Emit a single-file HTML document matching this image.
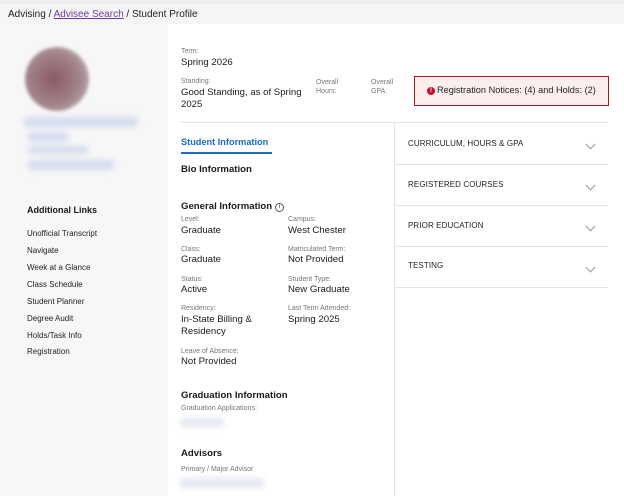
<!DOCTYPE html>
<html><head><meta charset="utf-8"><style>
*{margin:0;padding:0;box-sizing:border-box}
body{width:624px;height:496px;overflow:hidden;background:#f5f5f5;font-family:"Liberation Sans","DejaVu Sans",sans-serif;color:#1a1a1a;position:relative}
.a{position:absolute;white-space:nowrap}
.lb{font-size:7px;color:#777}
.v{font-size:9.6px;color:#1a1a1a}
.h{font-size:9.6px;font-weight:bold}
.lk{font-size:8px;color:#222}
.blur{position:absolute;background:#d5dcef;filter:blur(3px);border-radius:3px}
.acc{position:absolute;left:408px;font-size:8px;color:#222;letter-spacing:.1px}
.chev{position:absolute;left:587px;width:7px;height:7px;border-right:1px solid #999;border-bottom:1px solid #999;transform:rotate(45deg)}
.hl{position:absolute;left:395px;width:213px;height:1px;background:#e3e3e3}
</style></head><body>
<div class="a" style="left:0;top:0;width:624px;height:4px;background:#eee"></div>
<div class="a" style="left:8px;top:9px;font-size:10px;color:#222">Advising / <span style="color:#6a3d9a;text-decoration:underline">Advisee Search</span> / Student Profile</div>
<div class="a" style="left:0;top:24px;width:168px;height:472px;background:#f7f7f7"></div>
<div class="a" style="left:168px;top:24px;width:456px;height:472px;background:#fff"></div>

<div class="a" style="left:25px;top:47px;width:64px;height:64px;border-radius:50%;background:radial-gradient(circle at 45% 50%,#8a5a66,#a3848a 55%,#cfcfcf 100%);filter:blur(1.5px)"></div>
<div class="blur" style="left:24px;top:117px;width:114px;height:10px"></div>
<div class="blur" style="left:28px;top:132px;width:40px;height:10px"></div>
<div class="blur" style="left:28px;top:146px;width:60px;height:8px"></div>
<div class="blur" style="left:28px;top:160px;width:86px;height:10px"></div>

<div class="a h" style="left:27px;top:205px;font-size:9px">Additional Links</div>
<div class="a lk" style="left:27px;top:229px">Unofficial Transcript</div>
<div class="a lk" style="left:27px;top:246px">Navigate</div>
<div class="a lk" style="left:27px;top:263px">Week at a Glance</div>
<div class="a lk" style="left:27px;top:280px">Class Schedule</div>
<div class="a lk" style="left:27px;top:297px">Student Planner</div>
<div class="a lk" style="left:27px;top:314px">Degree Audit</div>
<div class="a lk" style="left:27px;top:331px">Holds/Task Info</div>
<div class="a lk" style="left:27px;top:347px">Registration</div>

<div class="a lb" style="left:181px;top:48px">Term:</div>
<div class="a v" style="left:181px;top:57px">Spring 2026</div>
<div class="a lb" style="left:181px;top:78px">Standing:</div>
<div class="a v" style="left:181px;top:87px;line-height:12px">Good Standing, as of Spring<br>2025</div>
<div class="a lb" style="left:316px;top:78px;line-height:9px">Overall<br>Hours:</div>
<div class="a lb" style="left:371px;top:78px;line-height:9px">Overall<br>GPA:</div>
<div class="a" style="left:414px;top:76px;width:195px;height:30px;border:1.5px solid #b3151e;background:#fdeeee"></div>
<div class="a" style="left:427px;top:87px;width:8px;height:8px;border-radius:50%;background:#c8102e;color:#fff;font-size:6px;font-weight:bold;text-align:center;line-height:8px">!</div>
<div class="a" style="left:437px;top:85px;font-size:9.2px;color:#222">Registration Notices: (4) and Holds: (2)</div>
<div class="a" style="left:181px;top:122px;width:427px;height:1px;background:#e3e3e3"></div>
<div class="a" style="left:394px;top:122px;width:1px;height:374px;background:#e3e3e3"></div>

<div class="a" style="left:181px;top:137px;font-size:9.2px;font-weight:bold;color:#1a6cc4">Student Information</div>
<div class="a" style="left:181px;top:152px;width:91px;height:1.5px;background:#1a6cc4"></div>
<div class="a h" style="left:181px;top:164px">Bio Information</div>
<div class="a h" style="left:181px;top:201px">General Information <span style="display:inline-block;width:9px;height:9px;border:1px solid #555;border-radius:50%;font-size:6px;font-weight:normal;text-align:center;line-height:7px;vertical-align:1px">i</span></div>

<div class="a lb" style="left:181px;top:216px">Level:</div><div class="a v" style="left:181px;top:225px">Graduate</div>
<div class="a lb" style="left:288px;top:216px">Campus:</div><div class="a v" style="left:288px;top:225px">West Chester</div>
<div class="a lb" style="left:181px;top:246px">Class:</div><div class="a v" style="left:181px;top:254px">Graduate</div>
<div class="a lb" style="left:288px;top:246px">Matriculated Term:</div><div class="a v" style="left:288px;top:254px">Not Provided</div>
<div class="a lb" style="left:181px;top:276px">Status:</div><div class="a v" style="left:181px;top:284px">Active</div>
<div class="a lb" style="left:288px;top:276px">Student Type:</div><div class="a v" style="left:288px;top:284px">New Graduate</div>
<div class="a lb" style="left:181px;top:305px">Residency:</div><div class="a v" style="left:181px;top:314px;line-height:12px">In-State Billing &amp;<br>Residency</div>
<div class="a lb" style="left:288px;top:305px">Last Term Attended:</div><div class="a v" style="left:288px;top:314px">Spring 2025</div>
<div class="a lb" style="left:181px;top:348px">Leave of Absence:</div><div class="a v" style="left:181px;top:356px">Not Provided</div>

<div class="a h" style="left:181px;top:390px">Graduation Information</div>
<div class="a lb" style="left:181px;top:405px">Graduation Applications:</div>
<div class="blur" style="left:180px;top:418px;width:44px;height:9px;background:#e4e8f2"></div>
<div class="a h" style="left:181px;top:448px">Advisors</div>
<div class="a lb" style="left:181px;top:466px">Primary / Major Advisor</div>
<div class="blur" style="left:180px;top:478px;width:84px;height:10px;background:#e4e8f2"></div>

<div class="acc" style="top:139px">CURRICULUM, HOURS &amp; GPA</div><div class="chev" style="top:141px"></div>
<div class="hl" style="top:164px"></div>
<div class="acc" style="top:180px">REGISTERED COURSES</div><div class="chev" style="top:182px"></div>
<div class="hl" style="top:205px"></div>
<div class="acc" style="top:221px">PRIOR EDUCATION</div><div class="chev" style="top:223px"></div>
<div class="hl" style="top:246px"></div>
<div class="acc" style="top:261px">TESTING</div><div class="chev" style="top:264px"></div>
<div class="hl" style="top:287px"></div>
</body></html>
